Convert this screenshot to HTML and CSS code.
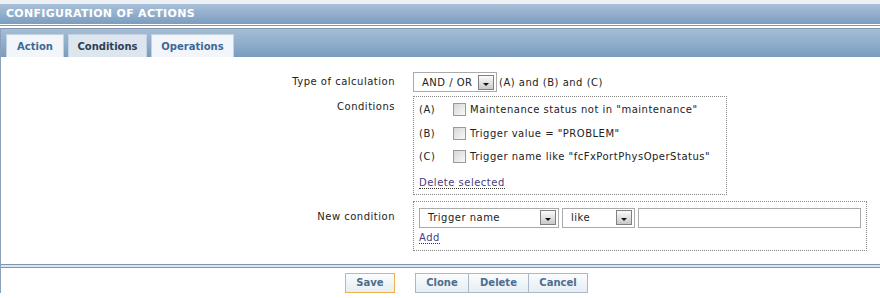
FILE: index.html
```html
<!DOCTYPE html>
<html>
<head>
<meta charset="utf-8">
<link rel="stylesheet" href="styles.css">
</head>
<body>
<div class="topstrip"></div>
<div class="hdr">CONFIGURATION OF ACTIONS</div>
<div class="sep"></div>
<div class="panel">
  <div class="tabbar">
    <div class="tab tab-action">Action</div>
    <div class="tab tab-cond active">Conditions</div>
    <div class="tab tab-ops">Operations</div>
  </div>
  <div class="content">
    <div class="form">
      <div class="lbl lbl-calc">Type of calculation</div>
      <div class="val val-calc">
        <div class="sel sel-calc"><span class="sel-text">AND / OR</span><span class="arrow"></span></div>
        <span class="calc-text">(A) and (B) and (C)</span>
      </div>

      <div class="lbl lbl-cond">Conditions</div>
      <div class="val">
        <div class="box box-cond">
          <div class="crow"><span class="cid">(A)</span><span class="cb"></span><span>Maintenance status not in "maintenance"</span></div>
          <div class="crow"><span class="cid">(B)</span><span class="cb"></span><span>Trigger value = "PROBLEM"</span></div>
          <div class="crow"><span class="cid">(C)</span><span class="cb"></span><span>Trigger name like "fcFxPortPhysOperStatus"</span></div>
          <div class="linkrow"><a class="lnk">Delete selected</a></div>
        </div>
      </div>

      <div class="lbl lbl-new">New condition</div>
      <div class="val">
        <div class="box box-new">
          <div class="newrow">
            <div class="sel sel-type"><span class="sel-text">Trigger name</span><span class="arrow"></span></div>
            <div class="sel sel-op"><span class="sel-text">like</span><span class="arrow"></span></div>
            <div class="inp"></div>
          </div>
          <div class="linkrow2"><a class="lnk">Add</a></div>
        </div>
      </div>
    </div>
  </div>
  <div class="dbl"></div>
  <div class="footer">
    <div class="fleft"><span class="btn btn-save">Save</span></div>
    <div class="fright">
      <div class="btngroup">
        <span class="btn">Clone</span><span class="btn">Delete</span><span class="btn">Cancel</span>
      </div>
    </div>
  </div>
</div>
</body>
</html>
```
FILE: styles.css
```css
* { box-sizing: border-box; }
html, body { margin: 0; padding: 0; background: #fff; }
body {
  width: 880px;
  height: 298px;
  overflow: hidden;
  font-family: "DejaVu Sans", Verdana, sans-serif;
  font-size: 10px;
  color: #222;
}
.topstrip { height: 4px; background: #eceff4; }
.hdr {
  height: 21px;
  background: linear-gradient(#a9c0d7, #7b9dc1);
  border-bottom: 1px solid #fff;
  color: #fff;
  font-weight: bold;
  font-size: 11px;
  line-height: 20px;
  padding-left: 6px;
  letter-spacing: 0.3px;
}
.sep {
  height: 3px;
  border-top: 1px solid #7e96b0;
  background: #fff;
}
.panel {
  border-top: 1px solid #7e96b0;
  border-left: 1px solid #8ba1b9;
}
.tabbar {
  height: 28px;
  background: linear-gradient(#a6bed6, #7a9cc0);
  display: flex;
  align-items: flex-end;
  gap: 4px;
  padding-left: 5px;
}
.tab {
  height: 23px;
  line-height: 23px;
  text-align: center;
  background: #f2f6fa;
  border: 1px solid #c5d3e1;
  border-bottom: none;
  color: #3d6896;
  font-weight: bold;
}
.tab-action { width: 58px; }
.tab-cond { width: 79px; }
.tab-ops { width: 83px; }
.tab.active {
  background: #dde6ef;
  color: #2e3e53;
}
.content {
  height: 207px;
  padding-top: 14px;
  letter-spacing: 0.5px;
}
.form {
  display: grid;
  grid-template-columns: 394px 1fr;
  column-gap: 18px;
  row-gap: 4px;
}
.lbl { text-align: right; }
.lbl-calc { line-height: 20px; padding-top: 1px; }
.lbl-cond { padding-top: 5px; }
.lbl-new { padding-top: 10px; margin-top: 2px; }
.val-calc { display: flex; align-items: center; gap: 2px; padding-top: 1px; }
.sel {
  height: 20px;
  border: 1px solid #aaa;
  background: #fff;
  display: flex;
  align-items: center;
  padding-left: 8px;
}
.sel-calc { width: 84px; }
.sel-type { width: 140px; }
.sel-op { width: 73px; }
.sel-text { flex: 1; }
.arrow {
  width: 16px;
  height: 15px;
  margin-right: 2px;
  border: 1px solid #808080;
  background: linear-gradient(#fbfbfb, #c9c9c9);
  position: relative;
}
.arrow::after {
  content: "";
  position: absolute;
  left: 4px;
  top: 7px;
  border-left: 3px solid transparent;
  border-right: 3px solid transparent;
  border-top: 3px solid #111;
}
.box {
  border: 1px dotted #888;
}
.box-cond { width: 314px; padding: 1px 5px 4px 5px; }
.crow {
  height: 23.5px;
  display: flex;
  align-items: center;
}
.cid { width: 34px; }
.cb {
  width: 13px;
  height: 13px;
  border: 1px solid #9a9a9a;
  background: linear-gradient(135deg, #d6d6d6, #f8f8f8);
  margin-right: 4px;
  flex: none;
}
.linkrow { margin-top: 8px; height: 13px; }
.lnk {
  color: #4a3c86;
  border-bottom: 1px dotted #333;
  text-decoration: none;
}
.box-new { width: 454px; margin-top: 2px; padding: 6px 5px 5px 5px; }
.newrow { display: flex; gap: 3px; }
.inp {
  flex: 1;
  height: 20px;
  border: 1px solid #aaa;
  background: #fff;
}
.linkrow2 { margin-top: 4px; height: 13px; }
.dbl {
  height: 4px;
  border-top: 1px solid #7e97b1;
  border-bottom: 1px solid #7e97b1;
  background: #dbe6f0;
}
.footer {
  display: grid;
  grid-template-columns: 394px 1fr;
  column-gap: 20px;
  padding-top: 5px;
}
.fleft { text-align: right; }
.btngroup { display: flex; }
.btn {
  display: inline-block;
  height: 20px;
  line-height: 18px;
  padding: 0 10px;
  border: 1px solid #a9b9ca;
  background: linear-gradient(#fbfcfd, #e6edf4);
  color: #4c6d8f;
  font-weight: bold;
  text-align: center;
}
.btn-save { border-color: #f0b24a; width: 50px; }
.btngroup .btn + .btn { border-left: 1px solid #a9b9ca; margin-left: -1px; }
.btngroup .btn:nth-child(1) { width: 54px; }
.btngroup .btn:nth-child(2) { width: 61px; }
.btngroup .btn:nth-child(3) { width: 60px; }
```
